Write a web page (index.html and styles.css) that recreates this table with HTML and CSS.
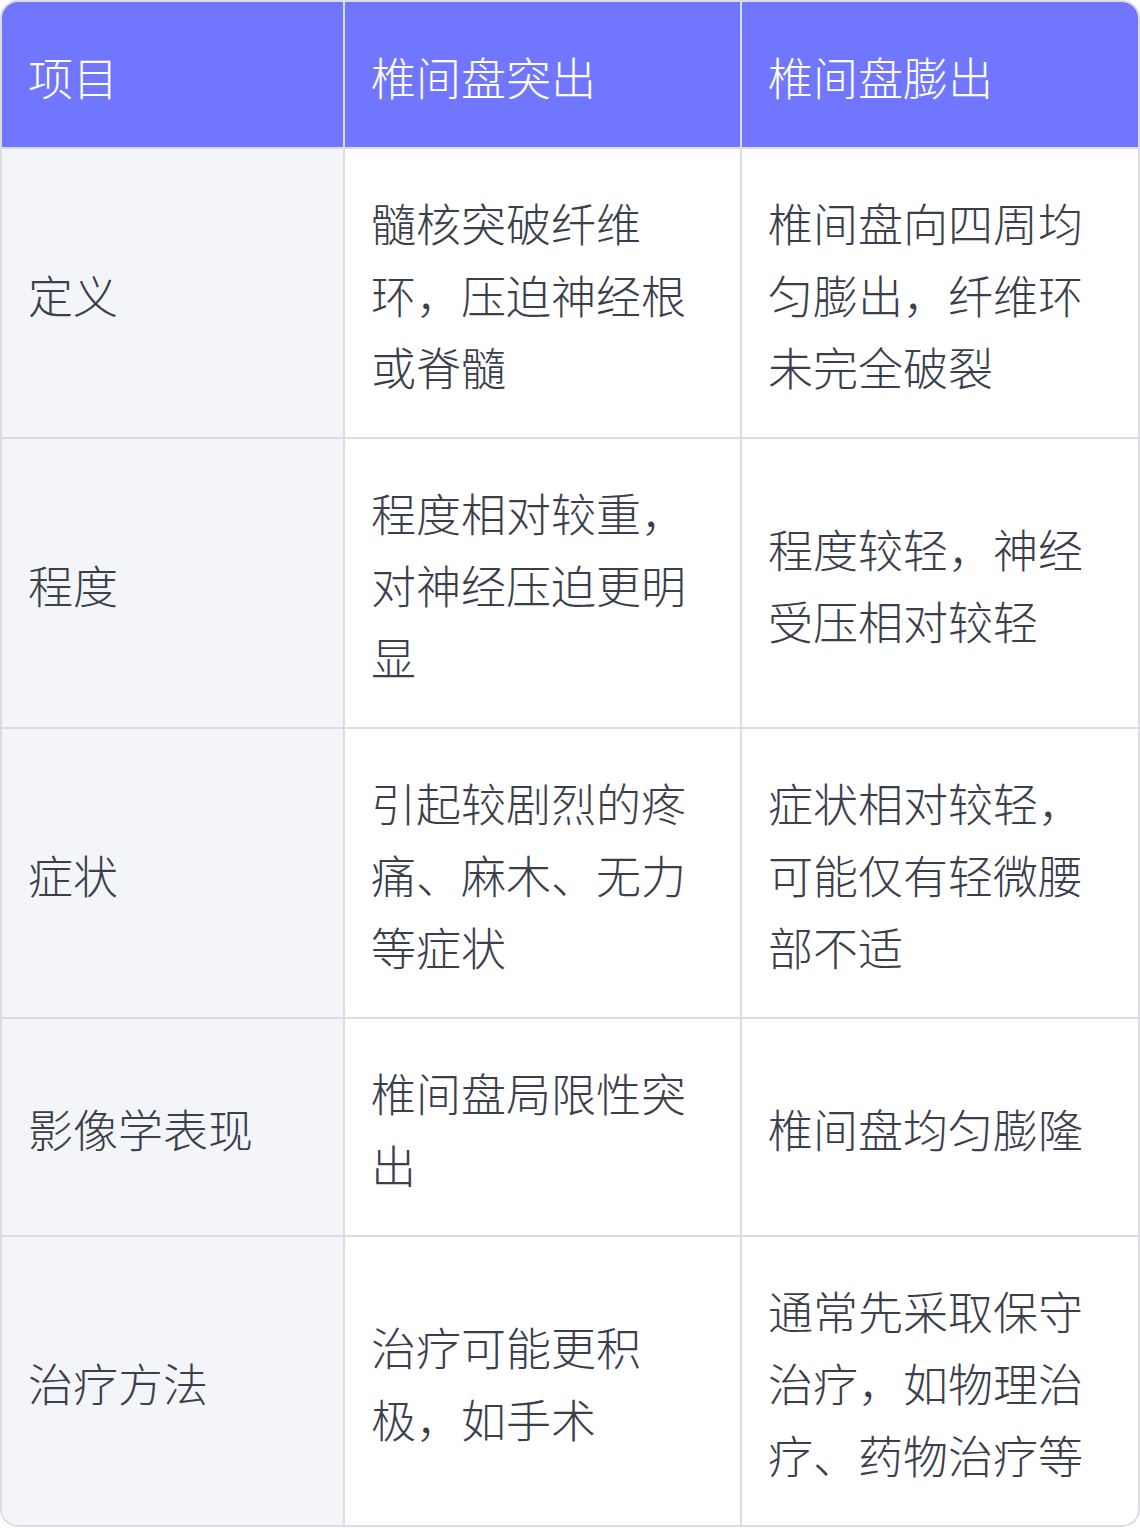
FILE: index.html
```html
<!DOCTYPE html>
<html lang="zh-CN">
<head>
<meta charset="utf-8">
<link rel="stylesheet" href="styles.css">
</head>
<body>
<div class="wrap">
<table class="cmp">
<colgroup><col class="c1"><col class="c2"><col class="c3"></colgroup>
<thead>
<tr><th>项目</th><th>椎间盘突出</th><th>椎间盘膨出</th></tr>
</thead>
<tbody>
<tr><td>定义</td><td>髓核突破纤维环，压迫神经根或脊髓</td><td>椎间盘向四周均匀膨出，纤维环未完全破裂</td></tr>
<tr><td>程度</td><td>程度相对较重，对神经压迫更明显</td><td>程度较轻，神经受压相对较轻</td></tr>
<tr><td>症状</td><td>引起较剧烈的疼痛、麻木、无力等症状</td><td>症状相对较轻，可能仅有轻微腰部不适</td></tr>
<tr><td>影像学表现</td><td>椎间盘局限性突出</td><td>椎间盘均匀膨隆</td></tr>
<tr><td>治疗方法</td><td>治疗可能更积极，如手术</td><td>通常先采取保守治疗，如物理治疗、药物治疗等</td></tr>
</tbody>
</table>
</div>
</body>
</html>
```
FILE: styles.css
```css
html, body {
  margin: 0;
  padding: 0;
  background: #ffffff;
}
.wrap {
  width: 1140px;
  box-sizing: border-box;
  border: 2px solid #dcdde2;
  border-radius: 18px;
  overflow: hidden;
}
.cmp {
  width: 100%;
  table-layout: fixed;
  border-collapse: separate;
  border-spacing: 0;
  font-family: "Noto Sans CJK SC", "Noto Sans", sans-serif;
  font-size: 45px;
  font-weight: 300;
  line-height: 72px;
  color: #3b3e4b;
}
.c1 { width: 343px; }
.c2 { width: 397px; }
.cmp th, .cmp td {
  padding: 38px 28px 34px 26px;
  text-align: left;
  vertical-align: middle;
  font-weight: 300;
  border-right: 2px solid #dcdde2;
  border-bottom: 2px solid #dcdde2;
  word-break: break-all;
}
.cmp th {
  padding-top: 39px;
  background: #7176ff;
  color: #ffffff;
}
.cmp th:last-child, .cmp td:last-child { border-right: 0; }
.cmp tbody tr:last-child td { border-bottom: 0; }
.cmp td:first-child {
  background: #f4f5f9;
}
.cmp td {
  background: #ffffff;
}
```
